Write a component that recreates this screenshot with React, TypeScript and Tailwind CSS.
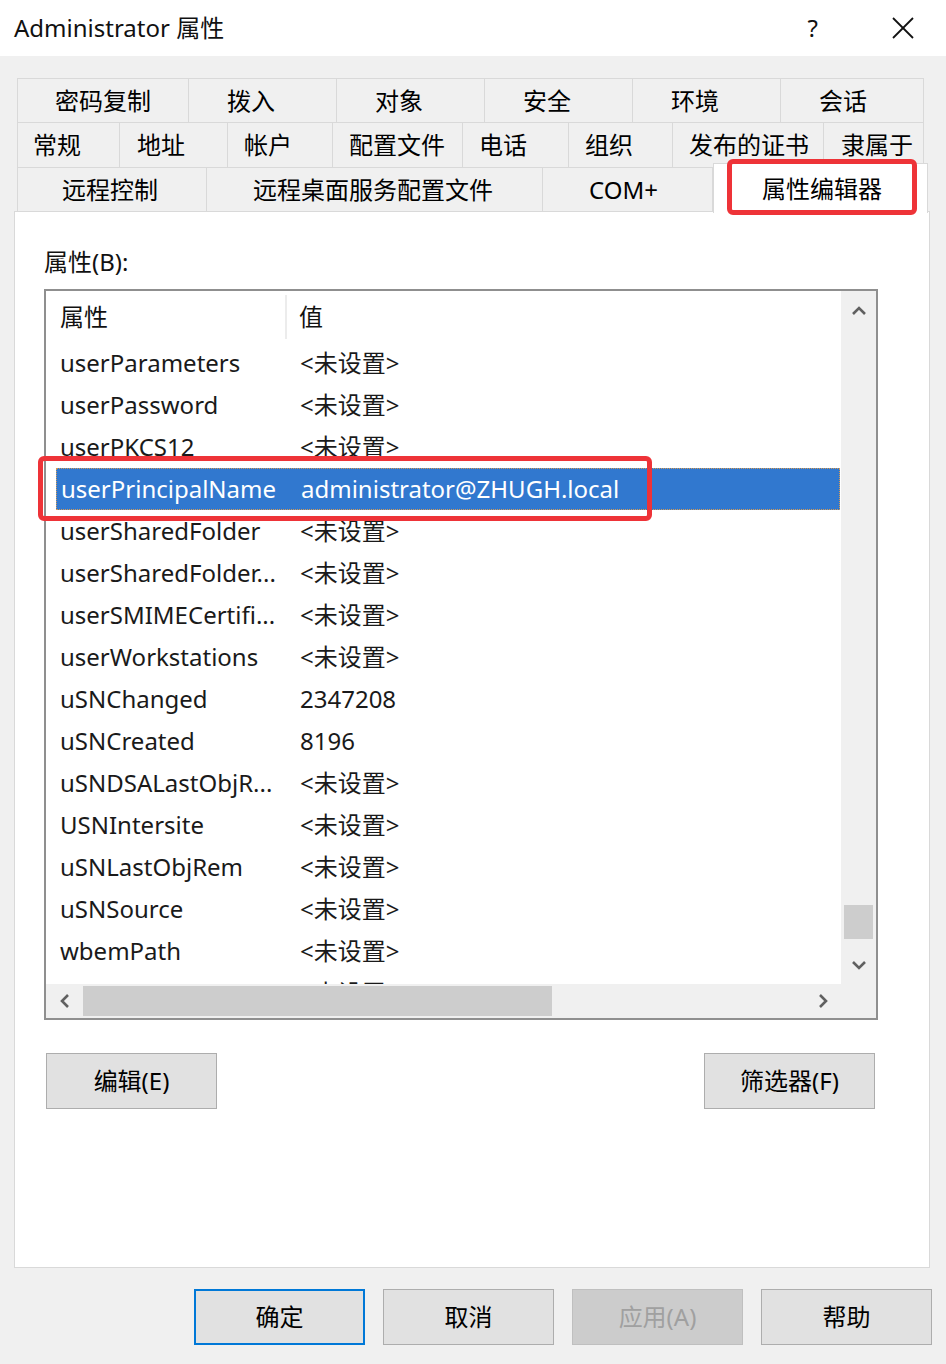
import React from "react";

const FONT = "font-['Noto_Sans','Noto_Sans_CJK_SC',sans-serif]";

type Tab = { label: string; w: number; pl: number };

const row1: Tab[] = [
  { label: "密码复制", w: 172, pl: 37 },
  { label: "拨入", w: 148, pl: 38 },
  { label: "对象", w: 148, pl: 38 },
  { label: "安全", w: 148, pl: 38 },
  { label: "环境", w: 148, pl: 38 },
  { label: "会话", w: 143, pl: 38 },
];
const row2: Tab[] = [
  { label: "常规", w: 103, pl: 15 },
  { label: "地址", w: 108, pl: 17 },
  { label: "帐户", w: 105, pl: 16 },
  { label: "配置文件", w: 130, pl: 16 },
  { label: "电话", w: 106, pl: 16 },
  { label: "组织", w: 104, pl: 16 },
  { label: "发布的证书", w: 151, pl: 16 },
  { label: "隶属于", w: 100, pl: 17 },
];
const row3: Tab[] = [
  { label: "远程控制", w: 190, pl: 44 },
  { label: "远程桌面服务配置文件", w: 336, pl: 46 },
  { label: "COM+", w: 170, pl: 46 },
];

const rows: [string, string, boolean?][] = [
  ["userParameters", "<未设置>"],
  ["userPassword", "<未设置>"],
  ["userPKCS12", "<未设置>"],
  ["userPrincipalName", "administrator@ZHUGH.local", true],
  ["userSharedFolder", "<未设置>"],
  ["userSharedFolder...", "<未设置>"],
  ["userSMIMECertifi...", "<未设置>"],
  ["userWorkstations", "<未设置>"],
  ["uSNChanged", "2347208"],
  ["uSNCreated", "8196"],
  ["uSNDSALastObjR...", "<未设置>"],
  ["USNIntersite", "<未设置>"],
  ["uSNLastObjRem", "<未设置>"],
  ["uSNSource", "<未设置>"],
  ["wbemPath", "<未设置>"],
  ["wWWHomePage", "<未设置>"],
];

function TabItem({ t, first }: { t: Tab; first?: boolean }) {
  return (
    <div
      className={`h-full flex items-center bg-[#f0f0f0] border-t border-r border-[#d9d9d9] text-[24px] text-[#000] shrink-0 ${first ? "border-l" : ""}`}
      style={{ width: t.w, paddingLeft: t.pl }}
    >
      {t.label}
    </div>
  );
}

function Chevron({ dir }: { dir: "up" | "down" | "left" | "right" }) {
  const pts: Record<string, string> = {
    up: "2,9 8,3 14,9",
    down: "2,3 8,9 14,3",
    left: "9,2 3,8 9,14",
    right: "3,2 9,8 3,14",
  };
  const isV = dir === "up" || dir === "down";
  return (
    <svg width={isV ? 16 : 12} height={isV ? 12 : 16} viewBox={isV ? "0 0 16 12" : "0 0 12 16"}>
      <polyline points={pts[dir]} fill="none" stroke="#606060" strokeWidth="2.6" />
    </svg>
  );
}

function Btn({ label, variant }: { label: string; variant?: "default" | "disabled" }) {
  const cls =
    variant === "default"
      ? "border-2 border-[#0078d7] bg-[#e1e1e1] text-[#000]"
      : variant === "disabled"
      ? "border border-[#bfbfbf] bg-[#cccccc] text-[#a0a0a0]"
      : "border border-[#adadad] bg-[#e1e1e1] text-[#000]";
  return (
    <div className={`w-[171px] h-[56px] flex items-center justify-center text-[24px] ${cls}`}>{label}</div>
  );
}

export default function App() {
  return (
    <div className={`relative w-[946px] h-[1364px] bg-[#f0f0f0] overflow-hidden ${FONT}`}>
      {/* Title bar */}
      <div className="h-[56px] bg-white flex items-center justify-between">
        <div className="pl-[14px] text-[24px] text-[#111] leading-none">Administrator 属性</div>
        <div className="flex items-center h-full">
          <div className="text-[24px] text-[#111] mr-[74px]">?</div>
          <svg width="22" height="22" viewBox="0 0 22 22" className="mr-[32px]">
            <line x1="1" y1="1" x2="21" y2="21" stroke="#111" strokeWidth="1.8" />
            <line x1="21" y1="1" x2="1" y2="21" stroke="#111" strokeWidth="1.8" />
          </svg>
        </div>
      </div>

      {/* Tabs */}
      <div className="mt-[22px] ml-[17px] flex flex-col">
        <div className="flex h-[44px]">
          {row1.map((t, i) => (
            <TabItem key={t.label} t={t} first={i === 0} />
          ))}
        </div>
        <div className="flex h-[45px]">
          {row2.map((t, i) => (
            <TabItem key={t.label} t={t} first={i === 0} />
          ))}
        </div>
        <div className="flex h-[44px] items-end">
          {row3.map((t, i) => (
            <TabItem key={t.label} t={t} first={i === 0} />
          ))}
          <div className="relative z-10 h-[50px] w-[215px] -mb-[2px] bg-white border-t border-l border-r border-[#d9d9d9] flex items-center pl-[48px] text-[24px] text-[#000] shrink-0">
            属性编辑器
          </div>
        </div>
      </div>

      {/* Panel */}
      <div className="ml-[14px] w-[916px] h-[1057px] bg-white border border-[#d9d9d9] flex flex-col">
        <div className="mt-[36px] ml-[29px] h-[28px] flex items-center text-[24px] text-[#111]">属性(B):</div>
        <div className="mt-[13px] ml-[29px] w-[834px] h-[731px] border-2 border-[#8f8f8f] flex flex-col bg-white">
          <div className="flex h-[693px]">
            <div className="w-[795px] h-full overflow-hidden flex flex-col">
              <div className="h-[51px] shrink-0 flex items-center text-[24px] text-[#111]">
                <div className="w-[241px] pl-[14px] h-[44px] flex items-center border-r-2 border-[#ececec]">属性</div>
                <div className="pl-[12px]">值</div>
              </div>
              {rows.map(([name, val, sel]) => (
                <div
                  key={name}
                  className={`h-[42px] shrink-0 ml-[10px] w-[784px] flex items-center text-[24px] ${
                    sel ? "bg-[#3178cf] text-white border border-dotted border-[#d49a55]" : "text-[#1a1a1a]"
                  }`}
                >
                  <div className="w-[240px] pl-[4px] whitespace-nowrap">{name}</div>
                  <div className="pl-[4px] whitespace-nowrap">{val}</div>
                </div>
              ))}
            </div>
            <div className="w-[35px] h-full bg-[#f0f0f0] flex flex-col items-center">
              <div className="h-[40px] flex items-center justify-center">
                <Chevron dir="up" />
              </div>
              <div className="flex-1" />
              <div className="h-[34px] w-[29px] bg-[#cdcdcd]" />
              <div className="h-[7px]" />
              <div className="h-[38px] flex items-center justify-center">
                <Chevron dir="down" />
              </div>
            </div>
          </div>
          <div className="flex h-[34px] bg-[#f0f0f0] items-center">
            <div className="w-[37px] flex justify-center">
              <Chevron dir="left" />
            </div>
            <div className="w-[469px] h-[30px] bg-[#cdcdcd]" />
            <div className="flex-1" />
            <div className="w-[37px] flex justify-center">
              <Chevron dir="right" />
            </div>
            <div className="w-[35px]" />
          </div>
        </div>
        <div className="mt-[33px] ml-[31px] w-[829px] flex justify-between">
          <Btn label="编辑(E)" />
          <Btn label="筛选器(F)" />
        </div>
      </div>

      {/* Bottom buttons */}
      <div className="mt-[21px] ml-[194px] flex gap-[18px]">
        <Btn label="确定" variant="default" />
        <Btn label="取消" />
        <Btn label="应用(A)" variant="disabled" />
        <Btn label="帮助" />
      </div>

      {/* Annotation boxes */}
      <div className="absolute z-20 left-[727px] top-[159px] w-[190px] h-[56px] border-[5px] border-[#ee3338] rounded-[6px] pointer-events-none" />
      <div className="absolute z-20 left-[38px] top-[456px] w-[614px] h-[65px] border-[5px] border-[#ee3338] rounded-[6px] pointer-events-none" />
    </div>
  );
}
